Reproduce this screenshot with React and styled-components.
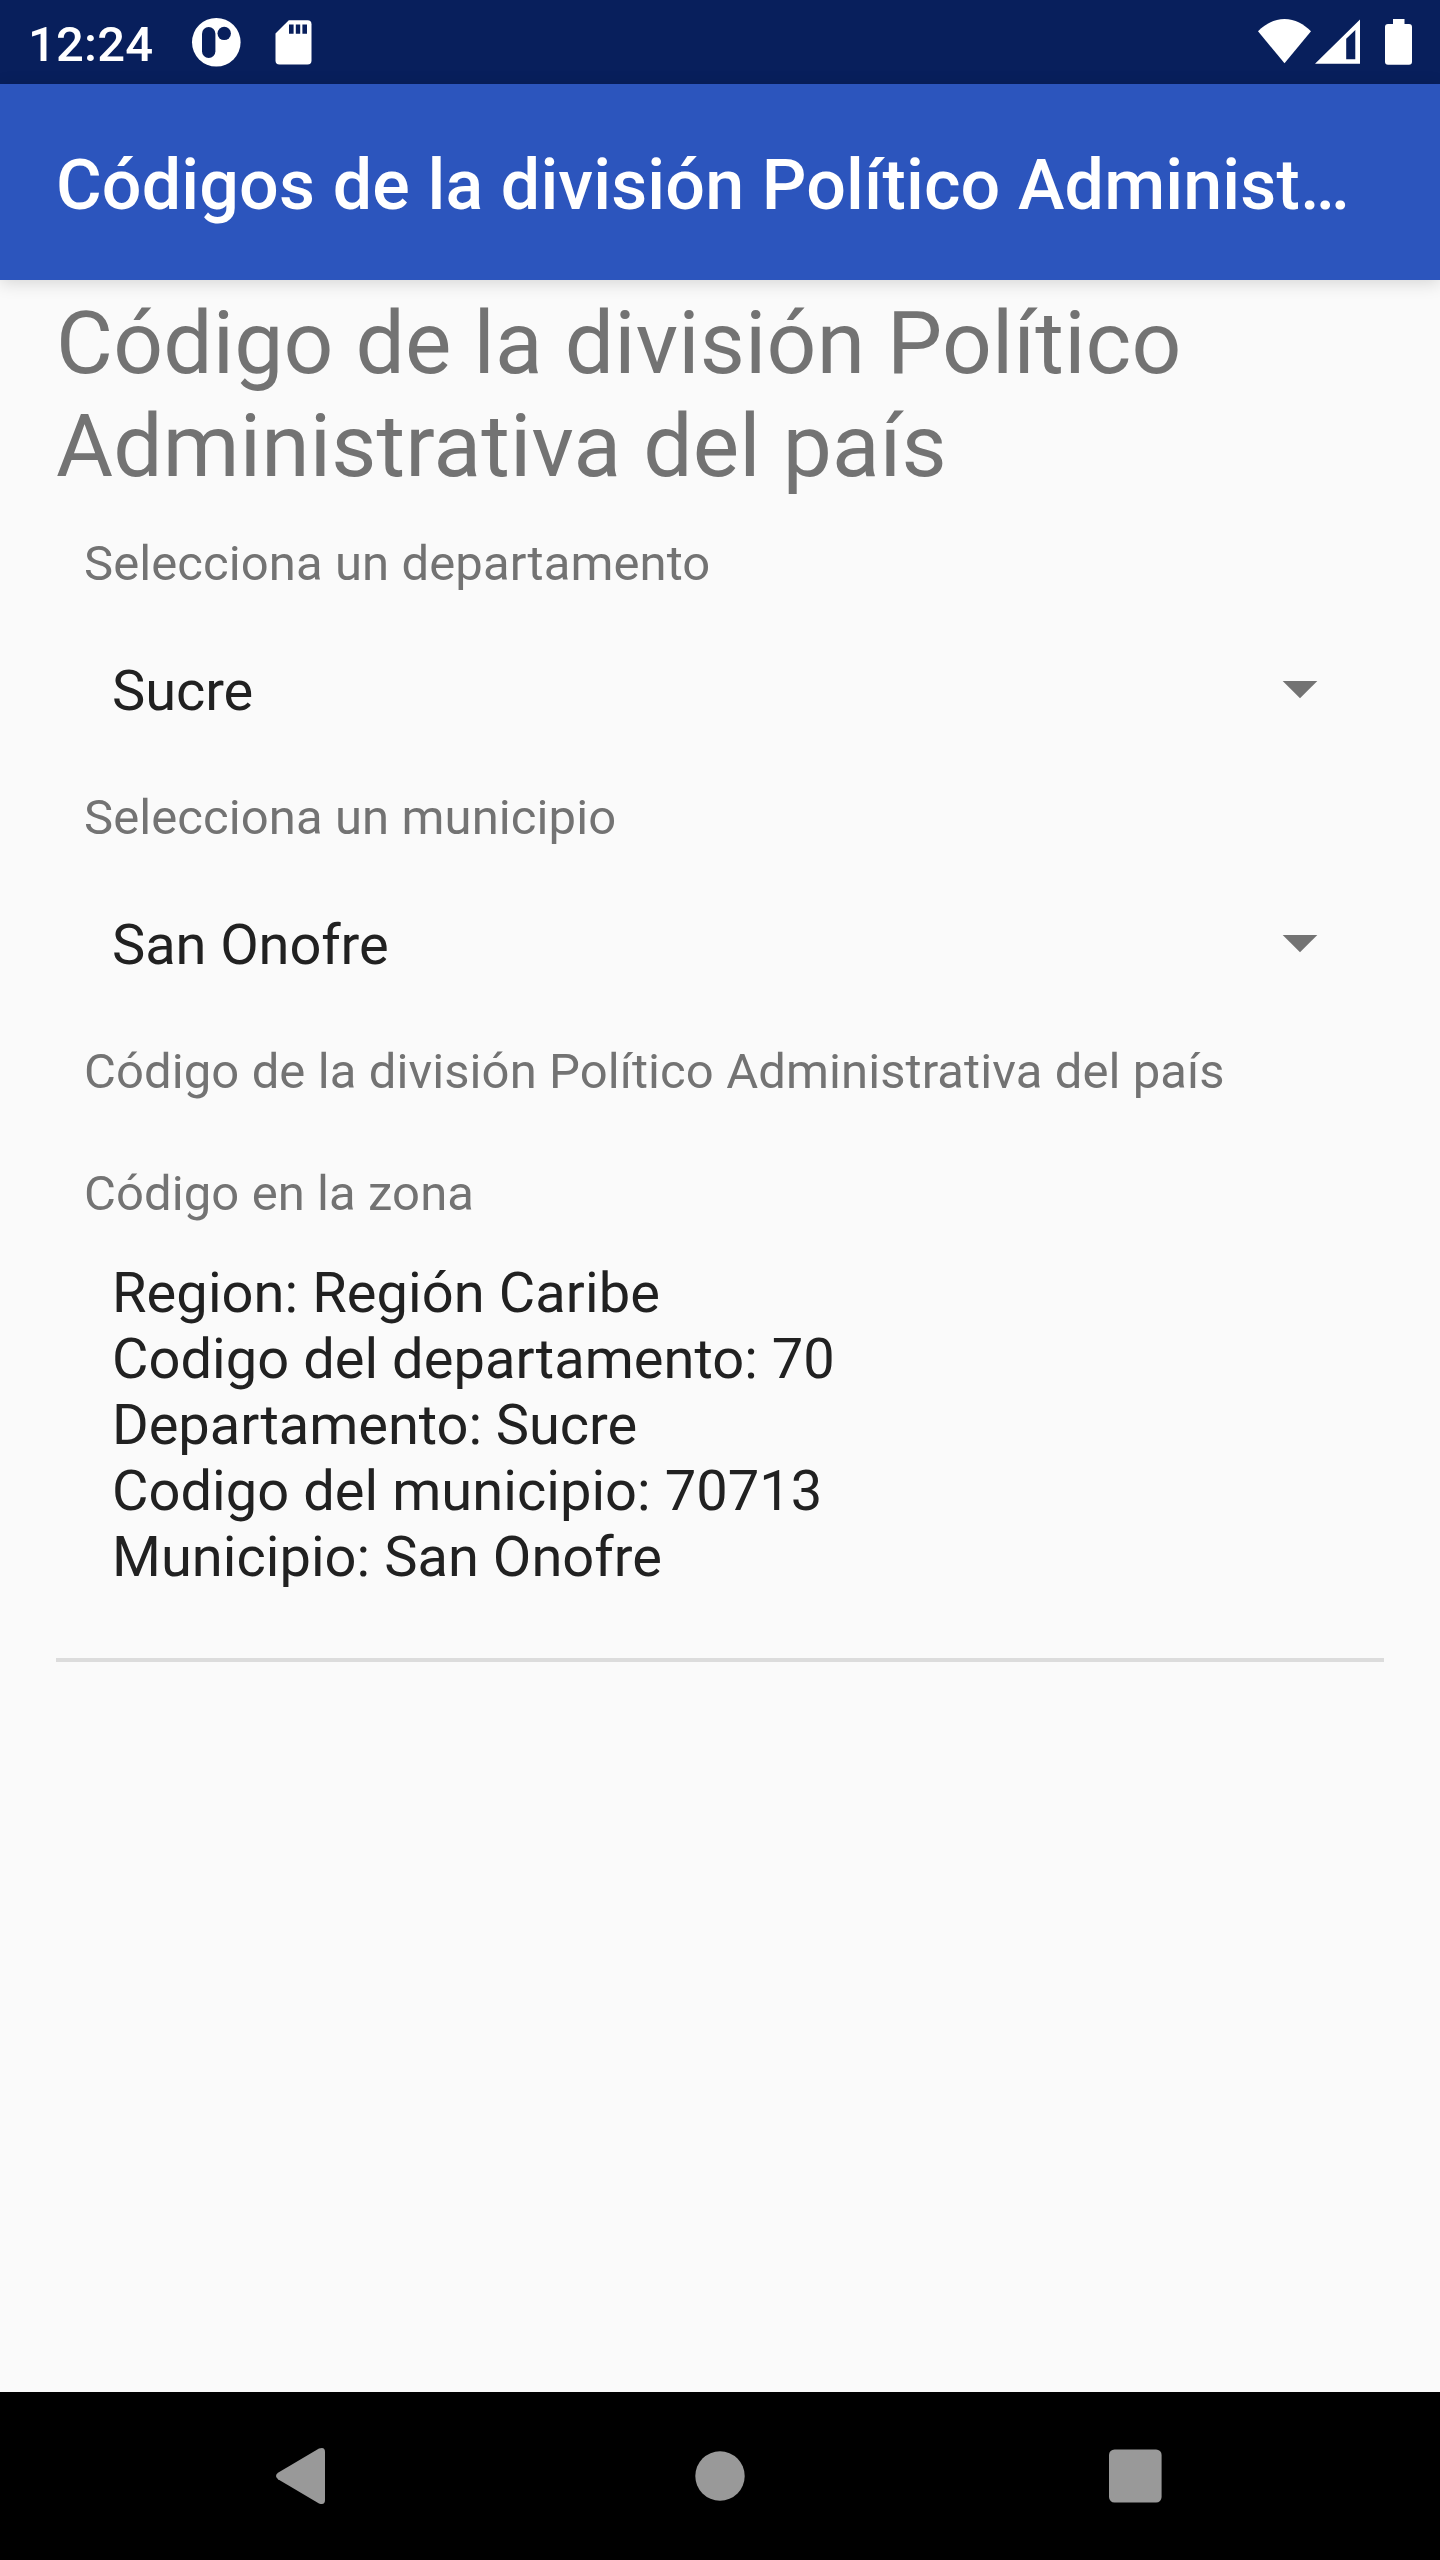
import React from "react";
import styled, { createGlobalStyle } from "styled-components";

const GlobalStyle = createGlobalStyle`
  body { margin: 0; background: #fafafa; }
  * { box-sizing: border-box; }
`;

const Screen = styled.div`
  width: 1440px;
  height: 2560px;
  display: flex;
  flex-direction: column;
  background: #fafafa;
  font-family: Roboto, "Noto Sans", sans-serif;
  overflow: hidden;
`;

const StatusBar = styled.header`
  flex: none;
  height: 84px;
  display: flex;
  align-items: flex-start;
  justify-content: space-between;
  padding: 0 28px;
  background: #081f5c;
`;

const StatusGroup = styled.div`
  display: flex;
  align-items: flex-start;
`;

const Clock = styled.time`
  width: 162px;
  padding-top: 16px;
  color: #fff;
  font-size: 49px;
  font-weight: 500;
  line-height: 57px;
  letter-spacing: 0.2px;
`;

const Glyph = styled.svg`
  display: block;
  flex: none;
`;

const AppBar = styled.div`
  flex: none;
  position: relative;
  height: 196px;
  padding: 60px 84px 0 56px;
  background: #2c55bd;
  box-shadow: 0 3px 16px rgba(0, 0, 0, 0.15);
`;

const AppTitle = styled.h1`
  margin: 0;
  white-space: nowrap;
  color: #fff;
  font-size: 70px;
  font-weight: 500;
  line-height: 82px;
  letter-spacing: 0.14px;
`;

const Content = styled.main`
  flex: 1;
  padding: 12px 56px 0;
`;

const Heading = styled.h2`
  margin: 0 0 37px;
  color: #737373;
  font-size: 87.5px;
  font-weight: 400;
  line-height: 103px;
  letter-spacing: 0.19px;
`;

const Label = styled.p`
  margin: 0 0 ${(p) => p.$gap || 0}px;
  padding-left: 28px;
  color: #737373;
  font-size: 49px;
  line-height: 57px;
  letter-spacing: 0.09px;
`;

const Select = styled.div`
  height: 197px;
  display: flex;
  align-items: center;
  justify-content: space-between;
  padding: 0 66px 0 56px;
  color: #212121;
  font-size: 56px;
  line-height: 66px;
  letter-spacing: -0.1px;
`;

const Details = styled.div`
  padding: 0 56px 68px;
  border-bottom: 4px solid #dcdcdc;
  color: #212121;
  font-size: 56px;
  line-height: 66px;
`;

const DetailLine = styled.div`
  letter-spacing: ${(p) => p.$spacing}px;
`;

const NavBar = styled.nav`
  flex: none;
  height: 168px;
  display: flex;
  justify-content: center;
  align-items: center;
  background: #000;
`;

const NavButton = styled.div`
  width: 416px;
  display: flex;
  justify-content: center;
`;

const Spinner = ({ value }) => (
  <Select>
    <span>{value}</span>
    <Glyph width="36" height="21" viewBox="0 0 36 21">
      <path d="M.7 1h34.600L18 18.300z" fill="#737373" />
    </Glyph>
  </Select>
);

const details = [
  { text: "Region: Región Caribe", spacing: 0.08 },
  { text: "Codigo del departamento: 70", spacing: 0.04 },
  { text: "Departamento: Sucre", spacing: -0.04 },
  { text: "Codigo del municipio: 70713", spacing: 0.05 },
  { text: "Municipio: San Onofre", spacing: 0.04 },
];

export default function App() {
  return (
    <>
      <GlobalStyle />
      <Screen>
        <StatusBar>
          <StatusGroup>
            <Clock>12:24</Clock>
            <Glyph width="130" height="84" viewBox="190 0 130 84">
              <circle cx="216.3" cy="42.3" r="24.3" fill="#fff" />
              <rect x="202" y="27" width="13.4" height="31" rx="6.7" fill="#081f5c" />
              <circle cx="224.2" cy="33.4" r="6.7" fill="#081f5c" />
              <path
                d="M288.8 20.2H307.5a4 4 0 0 1 4 4V60.5a4 4 0 0 1-4 4H279.5a4 4 0 0 1-4-4V33.4z"
                fill="#fff"
              />
              <path d="M289 24.5h4.6v9.2H289zM295.8 24.5h4.4v9.2h-4.4zM302.4 24.5h4.6v9.2h-4.6z" fill="#081f5c" />
            </Glyph>
          </StatusGroup>
          <Glyph width="162" height="84" viewBox="1250 0 162 84" fill="#fff">
            <path d="M1258 31.3C1265 24.3 1274 19 1284.500 19S1304 24.300 1311 31.300L1284.500 63.300z" />
            <path
              fillRule="evenodd"
              d="M1315 63.800L1360 19.500V63.800zM1346.200 38.800V59.300H1355.300V30z"
            />
            <path d="M1393 19h11.500v5h4.500a3 3 0 0 1 3 3v34.700a3 3 0 0 1-3 3h-21a3 3 0 0 1-3-3V27a3 3 0 0 1 3-3h5z" />
          </Glyph>
        </StatusBar>

        <AppBar>
          <AppTitle>Códigos de la división Político Administ…</AppTitle>
        </AppBar>

        <Content>
          <Heading>Código de la división Político Administrativa del país</Heading>
          <Label>Selecciona un departamento</Label>
          <Spinner value="Sucre" />
          <Label>Selecciona un municipio</Label>
          <Spinner value="San Onofre" />
          <Label $gap={65}>Código de la división Político Administrativa del país</Label>
          <Label $gap={38}>Código en la zona</Label>
          <Details>
            {details.map(({ text, spacing }) => (
              <DetailLine key={text} $spacing={spacing}>
                {text}
              </DetailLine>
            ))}
          </Details>
        </Content>

        <NavBar>
          <NavButton>
            <Glyph width="56" height="60" viewBox="0 0 56 60">
              <path
                d="M2 26.800L43 2.600Q49 .5 49 6V54Q49 59.500 43 57.400L2 33.200Q-2 30 2 26.800z"
                fill="#999"
              />
            </Glyph>
          </NavButton>
          <NavButton>
            <Glyph width="50" height="50" viewBox="0 0 50 50">
              <circle cx="25" cy="25" r="24.700" fill="#999" />
            </Glyph>
          </NavButton>
          <NavButton>
            <Glyph width="54" height="54" viewBox="0 0 54 54">
              <rect x="0" y=".5" width="52.600" height="53" rx="5.500" fill="#999" />
            </Glyph>
          </NavButton>
        </NavBar>
      </Screen>
    </>
  );
}
